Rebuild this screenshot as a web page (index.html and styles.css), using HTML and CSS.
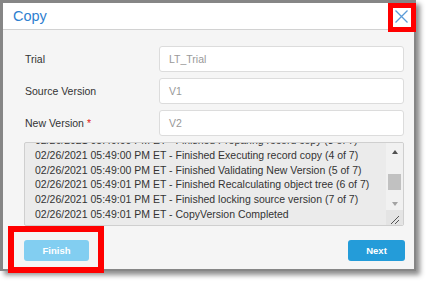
FILE: index.html
```html
<!DOCTYPE html>
<html>
<head>
<meta charset="utf-8">
<link rel="stylesheet" href="styles.css">
</head>
<body>
<div class="shot">
  <div class="dialog">
    <div class="header">
      <div class="title">Copy</div>
      <div class="close">
        <svg width="13" height="13" viewBox="0 0 13 13"><path d="M0.5 0.5 L12.5 12.5 M12.5 0.5 L0.5 12.5" stroke="#5a9bd8" stroke-width="1.3" fill="none"/></svg>
      </div>
    </div>
    <div class="body">
      <div class="form">
        <div class="label">Trial</div>
        <div class="input">LT_Trial</div>
        <div class="label">Source Version</div>
        <div class="input">V1</div>
        <div class="label">New Version <span class="req">*</span></div>
        <div class="input">V2</div>
      </div>
      <div class="log">
        <div class="log-text">
          <div class="lines">
            <div>02/26/2021 05:49:00 PM ET - Finished Preparing record copy (3 of 7)</div>
            <div>02/26/2021 05:49:00 PM ET - Finished Executing record copy (4 of 7)</div>
            <div>02/26/2021 05:49:00 PM ET - Finished Validating New Version (5 of 7)</div>
            <div>02/26/2021 05:49:01 PM ET - Finished Recalculating object tree (6 of 7)</div>
            <div>02/26/2021 05:49:01 PM ET - Finished locking source version (7 of 7)</div>
            <div>02/26/2021 05:49:01 PM ET - CopyVersion Completed</div>
          </div>
        </div>
        <div class="scrollbar">
          <div class="arrow up"></div>
          <div class="track"><div class="thumb"></div></div>
          <div class="arrow down"></div>
          <div class="grip">
            <svg width="16" height="15" viewBox="0 0 16 15"><path d="M13 6 L5 14 M13 10 L9 14" stroke="#555" stroke-width="1" fill="none"/></svg>
          </div>
        </div>
      </div>
      <div class="actions">
        <button class="btn finish">Finish</button>
        <button class="btn next">Next</button>
      </div>
    </div>
  </div>
  <div class="mark mark-close"></div>
  <div class="mark mark-finish"></div>
</div>
</body>
</html>
```

FILE: styles.css
```css
html, body {
  margin: 0;
  padding: 0;
  background: #ffffff;
}
body {
  width: 432px;
  height: 289px;
  overflow: hidden;
  font-family: "Liberation Sans", Arial, sans-serif;
}
.shot {
  position: relative;
  width: 432px;
  height: 289px;
}
.dialog {
  width: 411px;
  border-style: solid;
  border-color: #868686;
  border-width: 3px 2px 2px 3px;
  box-shadow: 4px 4px 5px rgba(0, 0, 0, 0.45);
  background: #f5f5f5;
}
.header {
  height: 26px;
  background: #ffffff;
  border-bottom: 1px solid #d2d2d2;
  display: flex;
  align-items: center;
  justify-content: space-between;
  padding: 0 6px 0 10px;
}
.title {
  font-size: 14.5px;
  color: #2e7fd0;
  line-height: 26px;
}
.close {
  width: 13px;
  height: 13px;
  margin-top: 1px;
  display: flex;
}
.body {
  padding: 16px 10px 8px 21px;
}
.form {
  display: grid;
  grid-template-columns: 135px 1fr;
  grid-auto-rows: 26px;
  row-gap: 6px;
}
.label {
  font-size: 10.5px;
  color: #333333;
  line-height: 26px;
  padding-left: 1px;
}
.req {
  color: #e02020;
}
.input {
  box-sizing: border-box;
  height: 26px;
  background: #ffffff;
  border: 1px solid #dcdcdc;
  border-radius: 3px;
  padding-left: 9px;
  font-size: 10.5px;
  line-height: 24px;
  color: #999999;
}
.log {
  margin-top: 6px;
  box-sizing: border-box;
  height: 84px;
  border: 1px solid #cfcfcf;
  border-radius: 2px;
  background: #ebebeb;
  display: flex;
  overflow: hidden;
}
.log-text {
  flex: 1;
  overflow: hidden;
  padding-left: 10px;
}
.lines {
  margin-top: -10px;
  font-size: 10.5px;
  line-height: 14.75px;
  color: #333333;
  white-space: nowrap;
}
.scrollbar {
  width: 17px;
  background: #f1f1f1;
  display: flex;
  flex-direction: column;
  align-items: center;
}
.arrow {
  width: 0;
  height: 0;
  border-left: 3.5px solid transparent;
  border-right: 3.5px solid transparent;
}
.arrow.up {
  margin-top: 7px;
  border-bottom: 4px solid #505050;
}
.track {
  height: 45px;
  width: 100%;
  display: flex;
  justify-content: center;
}
.thumb {
  margin-top: 20px;
  width: 13px;
  height: 16px;
  background: #c1c1c1;
}
.arrow.down {
  margin-top: 3px;
  border-top: 4px solid #a3a3a3;
}
.grip {
  margin-top: auto;
  width: 17px;
  height: 15px;
  background: #e4e4e4;
  display: flex;
}
.actions {
  margin-top: 14px;
  display: flex;
  justify-content: space-between;
}
.btn {
  height: 21px;
  border: none;
  border-radius: 3px;
  color: #ffffff;
  font-family: "Liberation Sans", Arial, sans-serif;
  font-weight: bold;
  font-size: 9.5px;
  padding: 0;
}
.finish {
  width: 65px;
  background: #82cef1;
}
.next {
  width: 57px;
  margin-right: -1px;
  background: #249cd9;
}
.mark {
  position: absolute;
  box-sizing: border-box;
  border-style: solid;
  border-color: #ff0000;
}
.mark-close {
  left: 388px;
  top: 3px;
  width: 28px;
  height: 29px;
  border-width: 5px;
}
.mark-finish {
  left: 8px;
  top: 226px;
  width: 96px;
  height: 47px;
  border-width: 6px;
}
```
